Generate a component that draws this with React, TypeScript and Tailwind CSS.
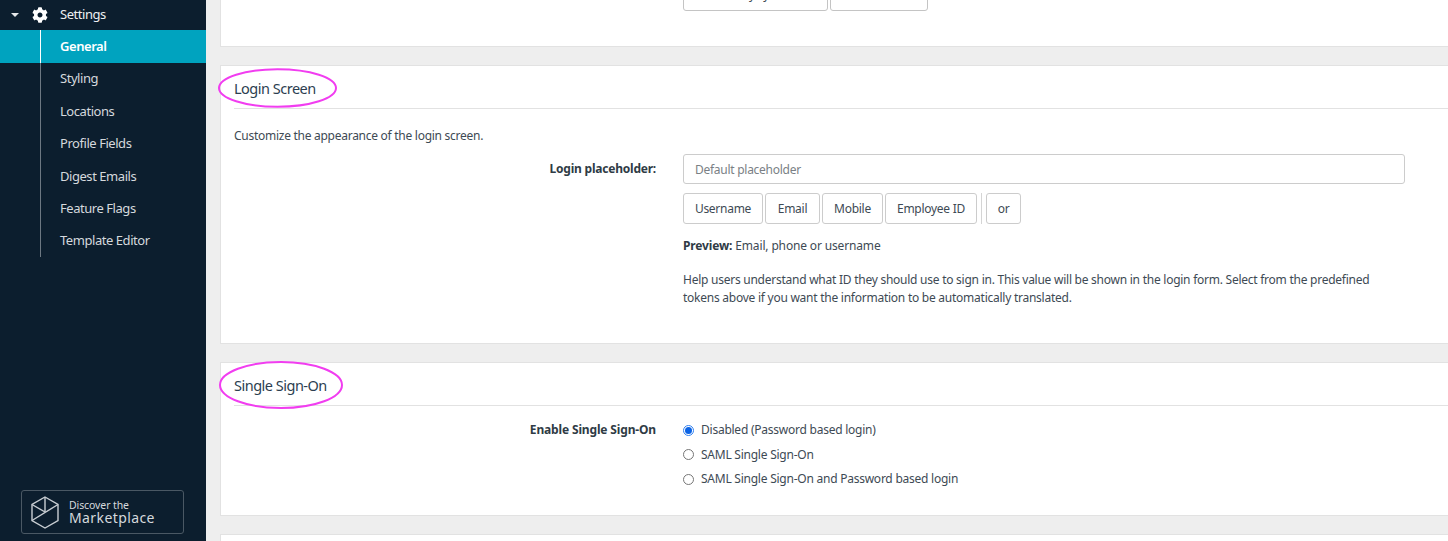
import type { ReactNode } from "react";

function MenuItem({ label, active }: { label: string; active?: boolean }) {
  return (
    <div className={active ? "h-[33px] flex items-center bg-[#00a3bf] text-white font-semibold" : "h-[32.4px] flex items-center text-[#d5d9dd]"}>
      <div className={active ? "h-full w-px ml-10 bg-white" : "h-full w-px ml-10 bg-[#6d7882]"} />
      <span className="ml-[19px] text-[13px] tracking-[-0.45px]">{label}</span>
    </div>
  );
}

function Sidebar() {
  return (
    <aside className="w-[206px] h-full shrink-0 bg-[#0c1e2e] flex flex-col">
      <div className="h-[30px] flex items-center text-white">
        <svg width="8" height="4" viewBox="0 0 8 4" className="ml-[11px]"><path d="M0 0h8L4 4z" fill="#e6e8ea" /></svg>
        <svg viewBox="0 0 512 512" width="16" height="16" className="ml-[13px]" fill="#fff">
          <path d="M487.4 315.7l-42.6-24.6c4.3-23.2 4.3-47 0-70.2l42.6-24.6c4.9-2.8 7.1-8.6 5.5-14-11.1-35.6-30-67.8-54.7-94.6-3.8-4.1-10-5.1-14.8-2.3L380.8 110c-17.9-15.4-38.5-27.3-60.8-35.1V25.8c0-5.6-3.9-10.5-9.4-11.7-36.7-8.2-74.3-7.8-109.2 0-5.5 1.2-9.4 6.1-9.4 11.7V75c-22.2 7.9-42.8 19.8-60.8 35.1L88.7 85.5c-4.9-2.8-11-1.9-14.8 2.3-24.7 26.7-43.6 58.9-54.7 94.6-1.7 5.4.6 11.2 5.5 14L67.3 221c-4.3 23.2-4.3 47 0 70.2l-42.6 24.6c-4.9 2.8-7.1 8.6-5.5 14 11.1 35.6 30 67.8 54.7 94.6 3.8 4.1 10 5.1 14.8 2.3l42.6-24.6c17.9 15.4 38.5 27.3 60.8 35.1v49.2c0 5.6 3.9 10.5 9.4 11.7 36.7 8.2 74.3 7.8 109.2 0 5.5-1.2 9.4-6.1 9.4-11.7v-49.2c22.2-7.9 42.8-19.8 60.8-35.1l42.6 24.6c4.9 2.8 11 1.9 14.8-2.3 24.7-26.7 43.6-58.9 54.7-94.6 1.5-5.5-.7-11.3-5.6-14.1zM256 336c-44.1 0-80-35.9-80-80s35.900-80 80-80 80 35.900 80 80-35.900 80-80 80z" />
        </svg>
        <span className="ml-[12px] text-[13px] text-[#eef0f2] tracking-[-0.45px]">Settings</span>
      </div>
      <MenuItem label="General" active />
      <MenuItem label="Styling" />
      <MenuItem label="Locations" />
      <MenuItem label="Profile Fields" />
      <MenuItem label="Digest Emails" />
      <MenuItem label="Feature Flags" />
      <MenuItem label="Template Editor" />
      <div className="mt-auto mb-[7px] ml-[21px] w-[163px] h-[44px] rounded-[3px] border border-[#4a5864] flex items-center text-[#d5d9dd]">
        <svg width="28" height="33" viewBox="0 0 28 33" fill="none" stroke="#c9ced3" strokeWidth="1.4" className="ml-[9px]">
          <path d="M14 1L27 8.500V24.500L14 32L1 24.500V8.500Z" />
          <path d="M14 1V16" />
          <path d="M1 8.500L14 16" />
          <path d="M27 8.500L1 24.500" />
        </svg>
        <div className="ml-[10px] flex flex-col">
          <span className="text-[10.5px] leading-[12px] tracking-[-0.1px]">Discover the</span>
          <span className="text-[14px] leading-[14px] tracking-[0.4px]">Marketplace</span>
        </div>
      </div>
    </aside>
  );
}

function Card({ title, height, children }: { title: string; height: number; children: ReactNode }) {
  return (
    <section className="bg-white border border-[#e2e2e2] border-r-0 ml-[14px] shrink-0" style={{ height }}>
      <div className="ml-[13px] h-[43px] border-b border-[#e2e2e2] flex items-center pt-[3px]">
        <h2 className="text-[14.5px] text-[#2c3e50] tracking-[-0.5px]">{title}</h2>
      </div>
      {children}
    </section>
  );
}

function TokenButton({ label, className }: { label: string; className: string }) {
  return (
    <button className={`${className} h-[31px] border border-[#cccccc] rounded-[3px] text-[12px] text-[#3e4a54] bg-white`}>{label}</button>
  );
}

function Radio({ label, checked }: { label: string; checked?: boolean }) {
  return (
    <label className="flex items-center h-[24.5px]">
      {checked ? (
        <span className="w-[11px] h-[11px] rounded-full border border-[#2f7ff0] flex items-center justify-center bg-white">
          <span className="w-[7px] h-[7px] rounded-full bg-[#0b63e5]" />
        </span>
      ) : (
        <span className="w-[11px] h-[11px] rounded-full border border-[#767676] bg-white" />
      )}
      <span className="ml-[7px] text-[12px] text-[#3e4a54] tracking-[-0.24px]">{label}</span>
    </label>
  );
}

export default function App() {
  return (
    <div className="w-[1448px] h-[541px] overflow-hidden flex bg-[#eeeeee] text-[#3e4a54] tracking-[-0.27px]" style={{ fontFamily: '"Noto Sans", sans-serif' }}>
      <Sidebar />
      <main className="flex-1 min-w-0 h-full overflow-hidden flex flex-col relative">
        <section className="h-[47px] shrink-0 ml-[14px] bg-white border-b border-l border-[#e2e2e2] overflow-hidden">
          <div className="flex gap-[2px] ml-[462px] -mt-[21px]">
            <button className="w-[145px] h-[32px] border border-[#c4c4c4] rounded-[3px] text-[12px] text-[#3e4a54]">Use my system</button>
            <button className="w-[98px] h-[32px] border border-[#c4c4c4] rounded-[3px] text-[12px] text-[#3e4a54]">Custom</button>
          </div>
        </section>
        <div className="h-[18px] shrink-0" />
        <Card title="Login Screen" height={279}>
          <p className="ml-[13px] mt-[19px] text-[12px] leading-[16px]">Customize the appearance of the login screen.</p>
          <div className="flex mt-[10px]">
            <div className="w-[435px] text-right font-bold text-[12px] leading-[30px] text-[#2f3b45] tracking-[-0.22px]">Login placeholder:</div>
            <div className="ml-[27px] w-[722px]">
              <div className="h-[30px] border border-[#cccccc] rounded-[3px] flex items-center px-[11px] pt-[2px] text-[12px] text-[#7a7f85]">Default placeholder</div>
              <div className="flex items-center mt-[9px]">
                <TokenButton label="Username" className="w-[80px]" />
                <TokenButton label="Email" className="w-[55px] ml-[2px]" />
                <TokenButton label="Mobile" className="w-[61px] ml-[2px]" />
                <TokenButton label="Employee ID" className="w-[92px] ml-[2px]" />
                <span className="w-px h-[31px] bg-[#d5d5d5] ml-[4px]" />
                <TokenButton label="or" className="w-[35px] ml-[4px]" />
              </div>
              <p className="mt-[13px] text-[12px] leading-[18px] tracking-[-0.15px]"><b className="text-[#2f3b45]">Preview:</b> Email, phone or username</p>
              <p className="mt-[16px] text-[12px] leading-[18px] tracking-[-0.25px]">Help users understand what ID they should use to sign in. This value will be shown in the login form. Select from the predefined tokens above if you want the information to be automatically translated.</p>
            </div>
          </div>
        </Card>
        <div className="h-[18px] shrink-0" />
        <Card title="Single Sign-On" height={154}>
          <div className="flex mt-[12px]">
            <div className="w-[435px] text-right font-bold text-[12px] leading-[24px] text-[#2f3b45] tracking-[-0.15px]">Enable Single Sign-On</div>
            <div className="ml-[27px]">
              <Radio label="Disabled (Password based login)" checked />
              <Radio label="SAML Single Sign-On" />
              <Radio label="SAML Single Sign-On and Password based login" />
            </div>
          </div>
        </Card>
        <div className="h-[18px] shrink-0" />
        <section className="flex-1 ml-[14px] bg-white border-t border-l border-[#e2e2e2]" />
        <svg className="absolute left-[10px] top-[67px] pointer-events-none" width="134" height="42" viewBox="0 0 134 42" fill="none">
          <ellipse cx="61.500" cy="21" rx="58.500" ry="18.800" stroke="#f13df0" strokeWidth="2" />
        </svg>
        <svg className="absolute left-[12px] top-[360px] pointer-events-none" width="134" height="50" viewBox="0 0 134 50" fill="none">
          <ellipse cx="63" cy="25" rx="61" ry="23" stroke="#f13df0" strokeWidth="2" />
        </svg>
      </main>
    </div>
  );
}
